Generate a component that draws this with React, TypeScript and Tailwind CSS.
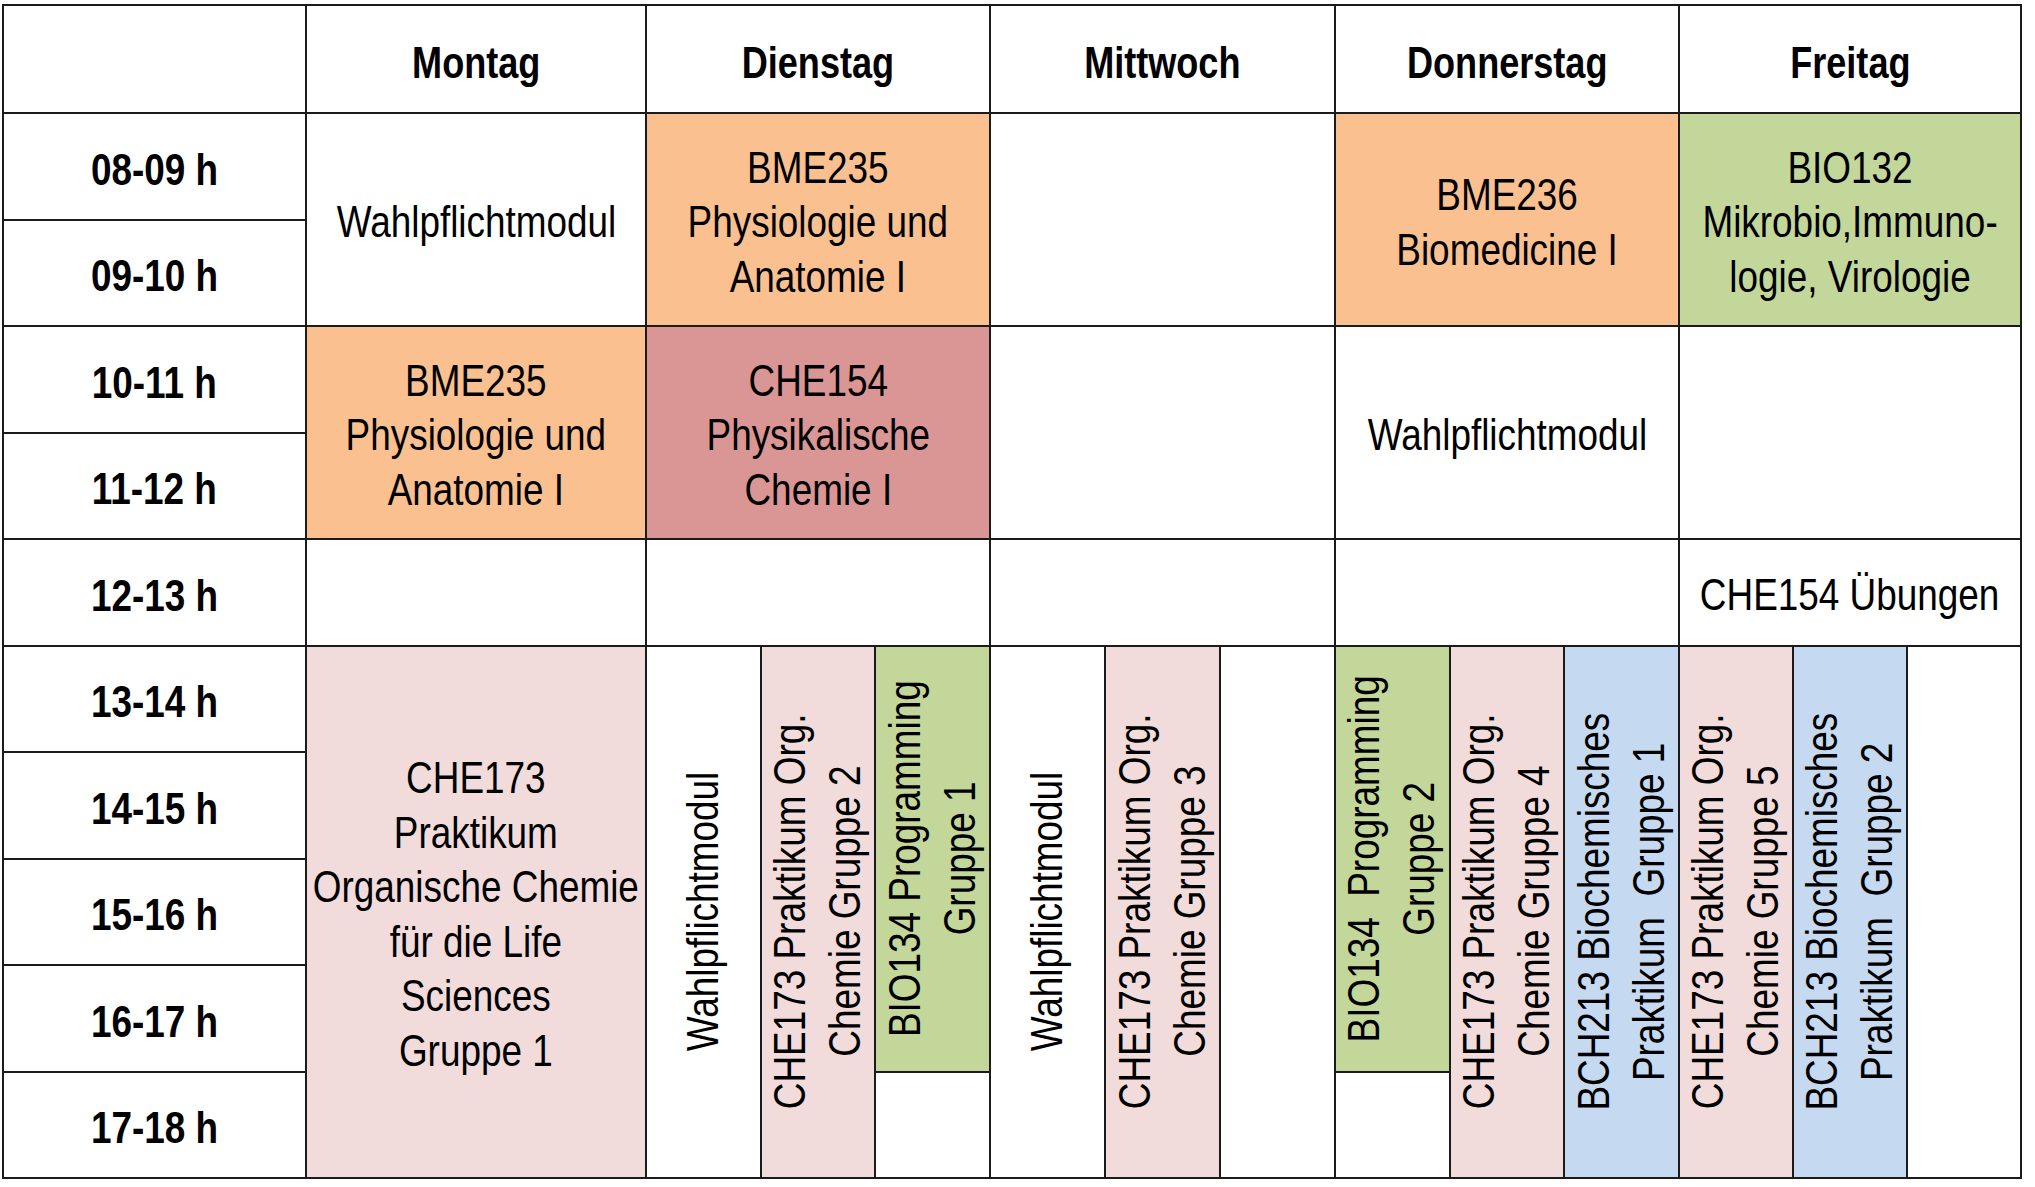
const days = ["Montag", "Dienstag", "Mittwoch", "Donnerstag", "Freitag"];

const times = [
	"08-09 h",
	"09-10 h",
	"10-11 h",
	"11-12 h",
	"12-13 h",
	"13-14 h",
	"14-15 h",
	"15-16 h",
	"16-17 h",
	"17-18 h",
];

type Slot = {
	col: string;
	row: string;
	span: string;
	bg: string;
	lines?: string[];
};

// merged blocks in the morning, one per day column
const morning: Slot[] = [
	{ col: "col-start-2", row: "row-start-2", span: "row-span-2", bg: "bg-white", lines: ["Wahlpflichtmodul"] },
	{ col: "col-start-2", row: "row-start-4", span: "row-span-2", bg: "bg-[#fac090]", lines: ["BME235", "Physiologie und", "Anatomie I"] },
	{ col: "col-start-2", row: "row-start-6", span: "row-span-1", bg: "bg-white" },
	{ col: "col-start-3", row: "row-start-2", span: "row-span-2", bg: "bg-[#fac090]", lines: ["BME235", "Physiologie und", "Anatomie I"] },
	{ col: "col-start-3", row: "row-start-4", span: "row-span-2", bg: "bg-[#da9694]", lines: ["CHE154", "Physikalische", "Chemie I"] },
	{ col: "col-start-3", row: "row-start-6", span: "row-span-1", bg: "bg-white" },
	{ col: "col-start-4", row: "row-start-2", span: "row-span-2", bg: "bg-white" },
	{ col: "col-start-4", row: "row-start-4", span: "row-span-2", bg: "bg-white" },
	{ col: "col-start-4", row: "row-start-6", span: "row-span-1", bg: "bg-white" },
	{ col: "col-start-5", row: "row-start-2", span: "row-span-2", bg: "bg-[#fac090]", lines: ["BME236", "Biomedicine I"] },
	{ col: "col-start-5", row: "row-start-4", span: "row-span-2", bg: "bg-white", lines: ["Wahlpflichtmodul"] },
	{ col: "col-start-5", row: "row-start-6", span: "row-span-1", bg: "bg-white" },
	{ col: "col-start-6", row: "row-start-2", span: "row-span-2", bg: "bg-[#c4d79b]", lines: ["BIO132", "Mikrobio,Immuno-", "logie, Virologie"] },
	{ col: "col-start-6", row: "row-start-4", span: "row-span-2", bg: "bg-white" },
	{ col: "col-start-6", row: "row-start-6", span: "row-span-1", bg: "bg-white", lines: ["CHE154 Übungen"] },
];

type Lab = { col: string; row: string; span: string; bg: string; lines?: string[] };

// afternoon practicals, three narrow columns per day
const afternoon: { col: string; cells: Lab[] }[] = [
	{
		col: "col-start-3",
		cells: [
			{ col: "col-start-1", row: "row-start-1", span: "row-span-5", bg: "bg-white", lines: ["Wahlpflichtmodul"] },
			{ col: "col-start-2", row: "row-start-1", span: "row-span-5", bg: "bg-[#f2dcdb]", lines: ["CHE173 Praktikum Org.", "Chemie Gruppe 2"] },
			{ col: "col-start-3", row: "row-start-1", span: "row-span-4", bg: "bg-[#c4d79b]", lines: ["BIO134 Programming", "Gruppe 1"] },
			{ col: "col-start-3", row: "row-start-5", span: "row-span-1", bg: "bg-white" },
		],
	},
	{
		col: "col-start-4",
		cells: [
			{ col: "col-start-1", row: "row-start-1", span: "row-span-5", bg: "bg-white", lines: ["Wahlpflichtmodul"] },
			{ col: "col-start-2", row: "row-start-1", span: "row-span-5", bg: "bg-[#f2dcdb]", lines: ["CHE173 Praktikum Org.", "Chemie Gruppe 3"] },
			{ col: "col-start-3", row: "row-start-1", span: "row-span-5", bg: "bg-white" },
		],
	},
	{
		col: "col-start-5",
		cells: [
			{ col: "col-start-1", row: "row-start-1", span: "row-span-4", bg: "bg-[#c4d79b]", lines: ["BIO134  Programming", "Gruppe 2"] },
			{ col: "col-start-1", row: "row-start-5", span: "row-span-1", bg: "bg-white" },
			{ col: "col-start-2", row: "row-start-1", span: "row-span-5", bg: "bg-[#f2dcdb]", lines: ["CHE173 Praktikum Org.", "Chemie Gruppe 4"] },
			{ col: "col-start-3", row: "row-start-1", span: "row-span-5", bg: "bg-[#c5d9f1]", lines: ["BCH213 Biochemisches", "Praktikum  Gruppe 1"] },
		],
	},
	{
		col: "col-start-6",
		cells: [
			{ col: "col-start-1", row: "row-start-1", span: "row-span-5", bg: "bg-[#f2dcdb]", lines: ["CHE173 Praktikum Org.", "Chemie Gruppe 5"] },
			{ col: "col-start-2", row: "row-start-1", span: "row-span-5", bg: "bg-[#c5d9f1]", lines: ["BCH213 Biochemisches", "Praktikum  Gruppe 2"] },
			{ col: "col-start-3", row: "row-start-1", span: "row-span-5", bg: "bg-white" },
		],
	},
];

// the sheet uses a narrow face; squeeze Liberation Sans to Arial Narrow proportions
function Lines({ lines }: { lines: string[] }) {
	return (
		<div className="scale-x-[0.82] text-center leading-[1.21] whitespace-pre">
			{lines.map((l, i) => (
				<div key={i}>{l}</div>
			))}
		</div>
	);
}

function VLines({ lines }: { lines: string[] }) {
	return (
		<div className="[writing-mode:vertical-rl] rotate-180 scale-y-[0.82] text-center leading-[1.22] whitespace-pre">
			{lines.map((l, i) => (
				<span key={i}>
					{i > 0 && <br />}
					{l}
				</span>
			))}
		</div>
	);
}

export default function App() {
	return (
		<div className="min-h-screen w-full bg-white pl-[2px] pt-[4px] text-black [font-family:'Liberation_Sans',Arial,sans-serif]">
			<div className="grid w-max grid-cols-[301px_338px_342px_343px_342px_340px] grid-rows-[106px_repeat(10,104.5px)] gap-[2px] bg-[#1b1b1b] p-[2px] text-[45px]">
				{/* header row */}
				<div className="col-start-1 row-start-1 bg-white" />
				{days.map((d, i) => (
					<div
						key={d}
						className={`row-start-1 flex items-center justify-center bg-white pt-[8px] text-[44px] font-bold ${
							["col-start-2", "col-start-3", "col-start-4", "col-start-5", "col-start-6"][i]
						}`}
					>
						<span className="scale-x-[0.82]">{d}</span>
					</div>
				))}

				{/* time column */}
				{times.map((t, i) => (
					<div
						key={t}
						className={`col-start-1 flex items-center justify-center bg-white pt-[6px] font-bold ${
							[
								"row-start-2",
								"row-start-3",
								"row-start-4",
								"row-start-5",
								"row-start-6",
								"row-start-7",
								"row-start-8",
								"row-start-9",
								"row-start-10",
								"row-start-11",
							][i]
						}`}
					>
						<span className="scale-x-[0.82]">{t}</span>
					</div>
				))}

				{morning.map((s, i) => (
					<div
						key={i}
						className={`${s.col} ${s.row} ${s.span} flex items-center justify-center pt-[6px] ${s.bg}`}
					>
						{s.lines && <Lines lines={s.lines} />}
					</div>
				))}

				{/* Montag afternoon */}
				<div className="col-start-2 row-start-7 row-span-5 flex items-center justify-center bg-[#f2dcdb] pt-[6px]">
					<Lines
						lines={[
							"CHE173",
							"Praktikum",
							"Organische Chemie",
							"für die Life",
							"Sciences",
							"Gruppe 1",
						]}
					/>
				</div>

				{afternoon.map((day) => (
					<div
						key={day.col}
						className={`${day.col} row-start-7 row-span-5 grid grid-cols-3 grid-rows-5 gap-[2px]`}
					>
						{day.cells.map((c, i) => (
							<div
								key={i}
								className={`${c.col} ${c.row} ${c.span} flex items-center justify-center ${c.bg}`}
							>
								{c.lines && <VLines lines={c.lines} />}
							</div>
						))}
					</div>
				))}
			</div>
		</div>
	);
}
